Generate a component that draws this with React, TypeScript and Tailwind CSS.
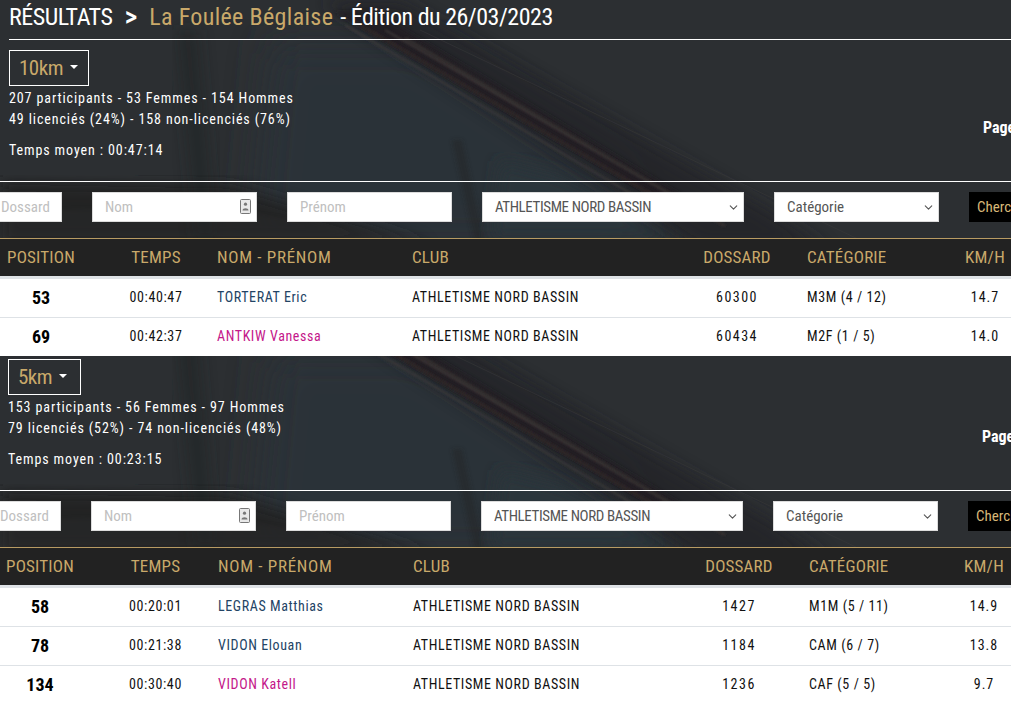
import { ChevronDown } from "lucide-react";

type Row = {
  pos: number;
  time: string;
  name: string;
  woman?: boolean;
  bib: string;
  cat: string;
  speed: string;
};

type Race = {
  km: string;
  stats: string[];
  avg: string;
  rows: Row[];
};

const race10: Race = {
  km: "10km",
  stats: ["207 participants - 53 Femmes - 154 Hommes", "49 licenciés (24%) - 158 non-licenciés (76%)"],
  avg: "Temps moyen : 00:47:14",
  rows: [
    { pos: 53, time: "00:40:47", name: "TORTERAT Eric", bib: "60300", cat: "M3M (4 / 12)", speed: "14.7" },
    { pos: 69, time: "00:42:37", name: "ANTKIW Vanessa", woman: true, bib: "60434", cat: "M2F (1 / 5)", speed: "14.0" },
  ],
};

const race5: Race = {
  km: "5km",
  stats: ["153 participants - 56 Femmes - 97 Hommes", "79 licenciés (52%) - 74 non-licenciés (48%)"],
  avg: "Temps moyen : 00:23:15",
  rows: [
    { pos: 58, time: "00:20:01", name: "LEGRAS Matthias", bib: "1427", cat: "M1M (5 / 11)", speed: "14.9" },
    { pos: 78, time: "00:21:38", name: "VIDON Elouan", bib: "1184", cat: "CAM (6 / 7)", speed: "13.8" },
    { pos: 134, time: "00:30:40", name: "VIDON Katell", woman: true, bib: "1236", cat: "CAF (5 / 5)", speed: "9.7" },
  ],
};

// photo behind the header: dark silk folds, drawn once and shifted per block
function Backdrop({ className }: { className: string }) {
  return (
    <svg className={className} width="1011" height="356" viewBox="0 0 1011 356" preserveAspectRatio="none">
      <defs>
        <filter id="b1"><feGaussianBlur stdDeviation="1" /></filter>
        <filter id="b2"><feGaussianBlur stdDeviation="2" /></filter>
        <filter id="b8"><feGaussianBlur stdDeviation="8" /></filter>
        <filter id="b20"><feGaussianBlur stdDeviation="20" /></filter>
      </defs>
      <rect width="1011" height="356" fill="#2c2f32" />
      <polygon points="270,40 420,40 620,170 640,250 250,250" fill="#2a3338" filter="url(#b20)" />
      <polygon points="500,160 560,175 680,240 490,240" fill="#2a363b" filter="url(#b8)" />
      <polygon points="0,182 230,186 430,245 0,245" fill="#222324" opacity="0.9" filter="url(#b8)" />
      <polygon points="176,30 198,30 216,240 196,240" fill="#1f2122" opacity="0.45" filter="url(#b8)" />
      <polygon points="452,140 462,140 484,240 474,240" fill="#202223" opacity="0.4" filter="url(#b2)" />
      <polygon points="320,0 400,0 770,210 830,250 700,250" fill="#242425" opacity="0.7" filter="url(#b8)" />
      <polygon points="335,12 375,12 690,200 660,200" fill="#211f20" opacity="0.8" filter="url(#b2)" />
      <g filter="url(#b1)" fill="none">
        <line x1="345" y1="25" x2="650" y2="205" stroke="#3a3839" strokeWidth="2" />
        <line x1="360" y1="25" x2="670" y2="205" stroke="#2e2627" strokeWidth="3" />
        <line x1="385" y1="30" x2="700" y2="212" stroke="#3b3536" strokeWidth="2" />
        <line x1="405" y1="38" x2="725" y2="226" stroke="#332e2e" strokeWidth="3" />
      </g>
      <line x1="420" y1="30" x2="860" y2="240" stroke="#3a3a3b" strokeWidth="1" opacity="0.5" />
      <polygon points="0,212 200,206 430,240 0,240" fill="#343637" opacity="0.2" filter="url(#b2)" />
    </svg>
  );
}

function ContactIcon() {
  return (
    <svg width="11" height="15" viewBox="0 0 11 15" className="absolute right-[6px] top-[7px] text-[#777]">
      <rect x="0.5" y="0.5" width="10" height="14" rx="1" fill="#e8e8e8" stroke="currentColor" />
      <circle cx="5.5" cy="5.2" r="1.6" fill="currentColor" />
      <path d="M2.5 11.5 C2.5 8.6 8.5 8.6 8.5 11.5 Z" fill="currentColor" />
    </svg>
  );
}

const fieldCls =
  "h-[30px] w-full bg-white border border-[#dcdcdc] pl-[12px] text-[15px] text-[#555] outline-none placeholder:text-[#c0c0c0]";

function Pick({ label, width, tight }: { label: string; width: string; tight?: boolean }) {
  return (
    <div className={`relative shrink-0 ${width}`}>
      <select className={`${fieldCls} appearance-none ${tight ? "tracking-[-0.4px]" : ""}`} defaultValue={label}>
        <option>{label}</option>
      </select>
      <ChevronDown size={13} strokeWidth={2} className="absolute right-[4px] top-[9px] text-[#555]" />
    </div>
  );
}

function ResultRow({ row, cols }: { row: Row; cols: string }) {
  return (
    <div className={`grid ${cols} h-[39px] items-center border-t border-[#dee2e6] bg-white pb-[2px] text-[14px] tracking-[0.6px] text-[#111]`}>
      <div className="text-center text-[18px] font-bold tracking-normal text-black">{row.pos}</div>
      <div className="pl-[13px] text-center">{row.time}</div>
      <div className={row.woman ? "text-[#c4178a]" : "text-[#234465]"}>{row.name}</div>
      <div>ATHLETISME NORD BASSIN</div>
      <div className="pr-[23px] text-center tracking-[1.5px]">{row.bib}</div>
      <div>{row.cat}</div>
      <div className="text-center tracking-[1px]">{row.speed}</div>
    </div>
  );
}

function Block({
  race,
  cols,
  head,
  left,
  boxW,
  filterLeft,
  bgClass,
  statsCls,
}: {
  race: Race;
  cols: string;
  head: React.ReactNode;
  left: string;
  boxW: string;
  filterLeft: string;
  bgClass: string;
  statsCls: string;
}) {
  return (
    <section>
      <div className="relative overflow-hidden">
        <Backdrop className={`absolute left-0 ${bgClass}`} />
        <div className="relative">
          {head}
          <div className={`flex items-start border-b border-white ${statsCls} ${left}`}>
            <div className="w-[974px] shrink-0">
              <button className={`flex h-[36px] ${boxW} items-center border border-white pl-[9px] pt-[1px] text-[21px] tracking-[-0.5px] text-[#c9a96a]`}>
                {race.km}
                <span className="ml-[7px] mt-[-3px] h-0 w-0 border-x-[4px] border-t-[4px] border-x-transparent border-t-white" />
              </button>
              <div className="mt-[2px] text-[14px] leading-[21px] tracking-[0.9px] text-white">
                {race.stats.map((s) => (
                  <div key={s}>{s}</div>
                ))}
                <div className="mt-[10px]">{race.avg}</div>
              </div>
            </div>
            <div className="mt-[66px] whitespace-nowrap text-[16px] font-bold text-white">Page 1</div>
          </div>
          <div className={`flex h-[56px] items-start gap-[30px] pt-[10px] ${filterLeft}`}>
            <input className={`${fieldCls} !w-[74px] shrink-0`} placeholder="Dossard" />
            <div className="relative w-[165px] shrink-0">
              <input className={fieldCls} placeholder="Nom" />
              <ContactIcon />
            </div>
            <input className={`${fieldCls} !w-[165px] shrink-0`} placeholder="Prénom" />
            <Pick label="ATHLETISME NORD BASSIN" width="w-[262px]" tight />
            <Pick label="Catégorie" width="w-[165px]" />
            <button className="h-[30px] w-[90px] shrink-0 bg-black pl-[8px] text-left text-[15px] text-[#d8b878]">Chercher</button>
          </div>
        </div>
      </div>
      <div className={`grid ${cols} h-[40px] items-center border-t border-[#b89b63] border-b-2 border-b-[#dee2e6] bg-[#222222] pt-[1px] text-[17px] tracking-[0.2px] text-[#c9a96a]`}>
        <div className="text-center">POSITION</div>
        <div className="pl-[13px] text-center">TEMPS</div>
        <div className="tracking-[0.7px]">NOM - PRÉNOM</div>
        <div>CLUB</div>
        <div className="pr-[23px] text-center">DOSSARD</div>
        <div>CATÉGORIE</div>
        <div className="text-center">KM/H</div>
      </div>
      {race.rows.map((r) => (
        <ResultRow key={r.pos} row={r} cols={cols} />
      ))}
    </section>
  );
}

export default function App() {
  return (
    <div className="h-screen overflow-hidden bg-white font-[Roboto,sans-serif] font-stretch-condensed">
      <Block
        race={race10}
        cols="grid-cols-[82px_135px_195px_278px_117px_127px_102px]"
        left="pl-[9px]"
        boxW="w-[80px]"
        filterLeft="ml-[-12px]"
        bgClass="top-0"
        statsCls="h-[142px] pt-[10px]"
        head={
          <div className="ml-[9px] flex h-[40px] items-center border-b border-white pb-[6px] text-[24px] text-white">
            <span className="tracking-[-0.45px]">RÉSULTATS</span>
            <span className="mx-[12px] text-[28px] font-medium leading-none">&gt;</span>
            <span className="tracking-[0.35px] text-[#c9a96a]">La Foulée Béglaise</span>
            <span className="ml-[7px] tracking-[-0.5px]">- Édition du 26/03/2023</span>
          </div>
        }
      />
      <Block
        race={race5}
        cols="grid-cols-[80px_138px_195px_279px_117px_127px_96px]"
        left="pl-[8px]"
        boxW="w-[73px]"
        filterLeft="ml-[-13px]"
        bgClass="-top-[47px]"
        statsCls="h-[135px] pt-[3px]"
        head={null}
      />
    </div>
  );
}
